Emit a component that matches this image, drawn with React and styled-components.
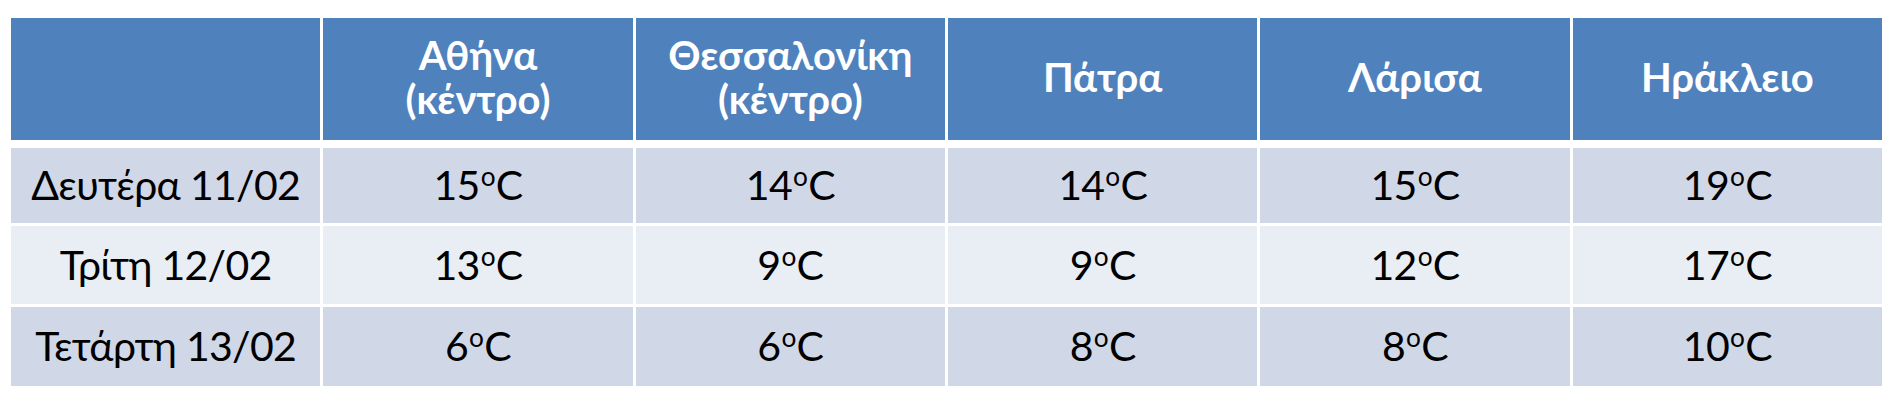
import styled, { createGlobalStyle } from "styled-components"

const GlobalStyle = createGlobalStyle`
  html, body {
    margin: 0;
    padding: 0;
    background: #ffffff;
  }
  body {
    font-family: Lato, "Open Sans", "Liberation Sans", sans-serif;
  }
`

const Page = styled.div`
  padding: 18px 8px 19px 11px;
  width: 1871px;
`

const Table = styled.div`
  display: flex;
  flex-direction: column;
  gap: 3px;
`

const Row = styled.div`
  display: grid;
  grid-template-columns: repeat(6, 1fr);
  column-gap: 3px;
  height: ${(p) => p.$height}px;
  margin-bottom: ${(p) => (p.$header ? 5 : 0)}px;
`

const HeadCell = styled.div`
  display: flex;
  align-items: center;
  justify-content: center;
  text-align: center;
  background: #4f81bd;
  color: #ffffff;
  font-weight: 700;
  font-size: 40px;
  line-height: 44px;
  padding-bottom: 4px;
`

const Cell = styled.div`
  display: flex;
  align-items: center;
  justify-content: center;
  background: ${(p) => (p.$light ? "#e9edf4" : "#d0d8e8")};
  color: #000000;
  font-size: 41px;
  letter-spacing: -0.7px;
  padding-bottom: 2px;
`

const Deg = styled.span`
  font-size: 0.64em;
  position: relative;
  top: -0.52em;
  margin: 0 1px;
`

const cities = [
  ["Αθήνα", "(κέντρο)"],
  ["Θεσσαλονίκη", "(κέντρο)"],
  ["Πάτρα"],
  ["Λάρισα"],
  ["Ηράκλειο"],
]

const days = [
  { label: "Δευτέρα 11/02", temps: [15, 14, 14, 15, 19], height: 75 },
  { label: "Τρίτη 12/02", temps: [13, 9, 9, 12, 17], height: 78, light: true },
  { label: "Τετάρτη 13/02", temps: [6, 6, 8, 8, 10], height: 79 },
]

const Temp = ({ value }) => (
  <span>
    {value}
    <Deg>o</Deg>C
  </span>
)

export default function App() {
  return (
    <Page>
      <GlobalStyle />
      <Table>
        <Row $height={122} $header>
          <HeadCell />
          {cities.map((lines) => (
            <HeadCell key={lines[0]}>
              <div>
                {lines.map((l) => (
                  <div key={l}>{l}</div>
                ))}
              </div>
            </HeadCell>
          ))}
        </Row>
        {days.map((d) => (
          <Row key={d.label} $height={d.height}>
            <Cell $light={d.light}>{d.label}</Cell>
            {d.temps.map((t, i) => (
              <Cell key={i} $light={d.light}>
                <Temp value={t} />
              </Cell>
            ))}
          </Row>
        ))}
      </Table>
    </Page>
  )
}
